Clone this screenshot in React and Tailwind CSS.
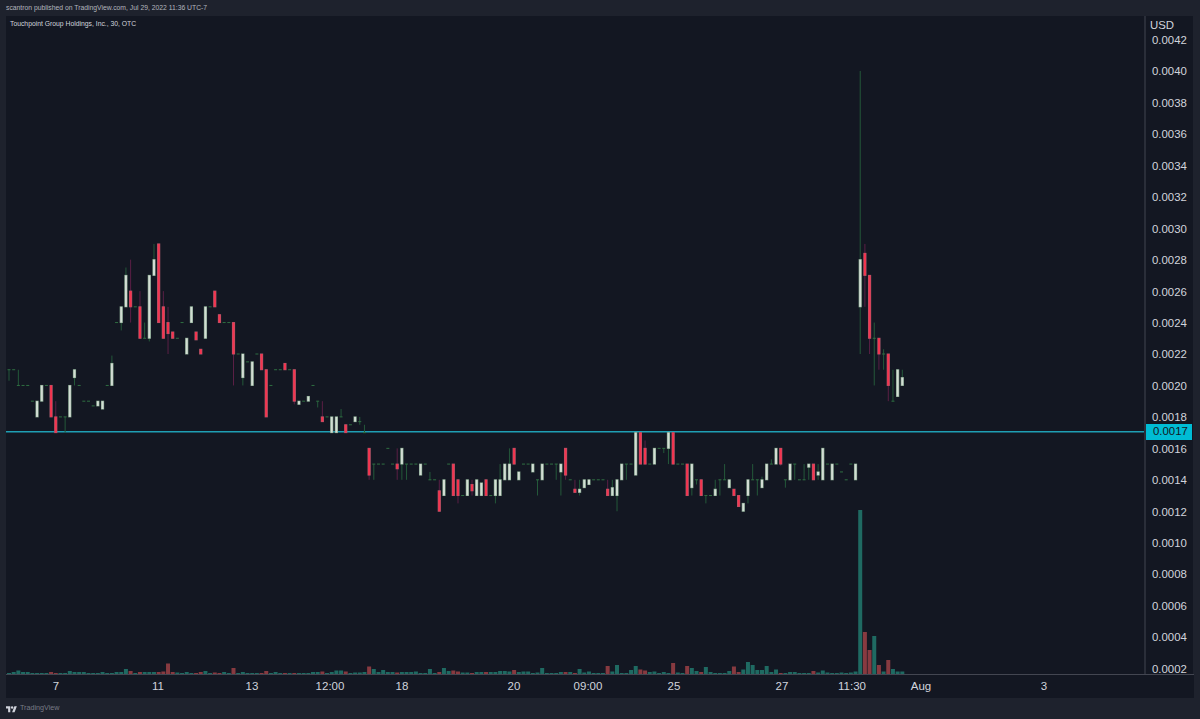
// Candles are [open, close, high?, low?] in units of 0.0001
const candles = [
  [21, 21, 21, 20.3], [21, 21], [20, 20, 21], [20, 20], [20, 20], [19, 19], [18, 19], [19, 20], [20, 20], [20, 18],
  [18, 17, 19], [18, 18], [18, 18, 18, 17], [18, 20], [20.5, 21, 21, 20], [20, 20], [19, 19], [19, 19], [18.7, 18.7], [18.7, 19],
  [18.5, 19], [20, 20], [20, 21.4, 21.9], [24, 24], [24, 25, 25, 23.5], [25, 27, 27.5], [26, 25, 28, 24], [25, 25], [25, 23, 26], [23, 23, 24],
  [23, 27, 27, 22.8], [27, 28, 29], [29, 24], [25, 23, 26], [24, 23.3, 25, 22], [23.4, 23], [23, 23], [24, 24], [22, 23], [24, 25],
  [23.4, 22.9], [22.3, 22], [23, 25], [25, 25], [26, 25], [24.5, 24], [24, 24], [24, 24], [24, 22, 24, 20], [22, 22],
  [20.5, 22, 22, 20], [21.5, 21.5], [20, 21.5], [22, 22], [22, 21], [21, 18], [20, 20], [21, 21], [21, 21], [21.4, 21],
  [21, 21], [21, 19, 21, 18.8], [18.8, 19], [19, 19], [19, 19.3], [20, 20], [19, 19, 19, 18.6], [18, 17.7, 19], [18, 18], [17, 18],
  [17, 18], [18, 18, 18.5], [17.5, 17], [17.5, 17.5], [17.7, 18], [17.7, 17.7, 18, 17.5], [17, 17, 17.5],
  [16, 14.3, 16, 14], [15, 15, 15, 14], [15, 15], [15, 15], [16, 16], [15, 15], [15, 14.7, 16, 14], [15, 16, 16, 14], [15, 15, 15, 14],
  [15, 15], [15, 15], [14.3, 15], [15, 15], [14, 14, 14.5], [14, 14], [13.3, 12, 14], [13, 14], [15, 15], [15, 13],
  [14, 13, 14, 12.5], [13, 13], [13, 14], [13.7, 13.3, 14, 13], [13, 14], [13, 13.8], [14, 13], [13, 13], [13, 14, 14, 12.5], [13, 14, 15],
  [14, 15], [14, 15, 16], [16, 15], [14, 14.5], [15, 15], [15, 15], [14.5, 15], [14, 14, 14, 13], [14, 15], [15, 15],
  [15, 15], [15, 15, 15, 14], [14.5, 15, 15, 13], [16, 14.3, 16, 14], [14, 14], [13.4, 13.2, 14], [13.2, 13.4, 14, 13], [13.5, 14], [13.7, 14], [14, 14],
  [14, 14], [14, 14], [13.4, 13, 14], [13, 13.5, 14], [13, 14, 14, 12], [14, 15], [15, 15, 15, 14], [15, 15], [14.3, 17], [17, 15],
  [16, 15, 16.5], [15, 15], [15, 16], [16, 16], [16, 16, 16, 15.7], [16, 17, 17, 15], [17, 15], [15, 15], [15, 15], [15, 13],
  [13.5, 15, 15, 13], [14, 14, 14, 13.7], [14, 13], [13, 13, 13, 12.5], [13, 13], [13, 13.4, 14], [14, 14, 14, 13], [14, 14, 15], [13.5, 14], [13.4, 13],
  [13, 12.3], [12, 12.5], [13, 14, 14, 12.5], [14, 14, 15], [14, 14, 14, 13], [13.5, 14, 14.2], [14, 15], [15, 15, 15.3], [15, 16], [16, 15, 16, 14.9],
  [14, 14, 14, 13.5], [14, 15], [15, 15, 15, 14], [14, 14], [14, 14, 15], [14.8, 15, 15, 14], [15, 14], [14.3, 14.5, 15, 14], [14, 16], [15, 15],
  [14, 15], [15, 15], [14.5, 14.5], [14, 14], [15, 15], [14, 15],
  [25, 28, 40, 22], [28.4, 27, 29, 25], [27, 23, 27, 22], [23, 23, 24, 20], [23, 22, 23, 21], [22, 22, 22.3, 21], [22, 20, 22, 19], [19, 19, 21], [19.3, 21], [20, 20.5, 21],
]

// Volume heights in px where they stand out, everything else is a thin base
const volumes = {
  1: 2, 2: 3.5, 3: 2, 4: 2, 9: 2, 13: 3, 14: 2, 15: 2, 16: 2, 20: 2, 23: 2, 24: 2, 25: 5, 26: 3, 28: 2, 29: 2, 30: 2, 31: 2, 32: 2, 33: 2.5, 34: 10.5, 35: 2,
  36: 1.5, 38: 2, 41: 2, 42: 3, 44: 1.5, 46: 2, 48: 6, 50: 2, 55: 3, 57: 2, 62: 1, 65: 2, 66: 2, 67: 2.5, 69: 2, 70: 3.5, 71: 3.5, 72: 2.5,
  74: 1.5, 75: 1.5, 76: 2, 77: 7.5, 78: 5, 79: 2, 80: 4, 81: 2, 82: 2, 83: 1.5, 84: 2, 85: 2, 86: 2, 87: 2.5, 90: 5, 92: 2, 93: 6, 94: 3,
  95: 3.5, 96: 2.5, 97: 1.5, 98: 1.5, 100: 2, 101: 2, 102: 2, 103: 2, 104: 2, 105: 3, 106: 3, 107: 2.5, 108: 4, 109: 2, 110: 2.5, 111: 2.5,
  113: 1.5, 114: 6, 118: 2, 119: 2, 120: 2, 122: 5, 123: 1.5, 124: 2.5, 128: 8, 129: 2.5, 130: 9, 133: 4, 134: 8, 135: 4.5, 136: 3.5, 137: 2,
  138: 2.5, 140: 2, 142: 11, 143: 1.5, 145: 8, 146: 6, 147: 3, 148: 2, 149: 7, 150: 2, 154: 3, 155: 7.5, 156: 2, 157: 4.5, 158: 12, 159: 9,
  160: 4, 161: 4, 162: 8, 163: 2, 164: 4.5, 167: 2, 168: 2, 172: 3, 173: 1.5, 174: 3.5, 175: 1.5, 178: 1.5, 180: 1.5, 181: 2.5,
  182: 164, 183: 42, 184: 24, 185: 38, 186: 9, 187: 2.5, 188: 14, 189: 5, 190: 2.5, 191: 2.5,
}

const prices = ['0.0042', '0.0040', '0.0038', '0.0036', '0.0034', '0.0032', '0.0030', '0.0028', '0.0026', '0.0024', '0.0022',
  '0.0020', '0.0018', '0.0016', '0.0014', '0.0012', '0.0010', '0.0008', '0.0006', '0.0004', '0.0002']

const yOf = (p) => 39.5 + (42 - p) * 15.725
const xOf = (i) => 9 + i * 4.677

function Candle({ i, data }) {
  const [o, c, high = Math.max(o, c), low = Math.min(o, c)] = data
  const x = xOf(i)
  const up = c >= o
  const wick = up ? '#24583a' : '#5a1f45'
  const wickEl = high > low && (
    <rect x={x - 0.5} y={yOf(high)} width="1" height={yOf(low) - yOf(high)} fill={wick} />
  )
  if (o === c) {
    return (
      <g>
        {wickEl}
        <rect x={x - 1.5} y={yOf(o) - 0.5} width="3" height="1" fill="#2f6f42" />
      </g>
    )
  }
  const top = yOf(Math.max(o, c)) - 0.5
  const h = Math.max(3, yOf(Math.min(o, c)) - top + 0.5)
  return (
    <g>
      {wickEl}
      <rect x={x - 1.6} y={top} width="3.2" height={h} fill={up ? '#7fa088' : '#a85a6c'} />
      <rect x={x - 1} y={top + 0.5} width="2" height={h - 1} fill={up ? '#d3ddd4' : '#f5344f'} />
    </g>
  )
}

function Chart() {
  return (
    <svg className="block h-full w-full" viewBox="6 16 1138 658">
      {candles.map((data, i) => {
        const up = data[1] >= data[0]
        const h = volumes[i] ?? 1
        return <rect key={i} x={xOf(i) - 2} y={674 - h} width="4" height={h} fill={up ? '#1f6a62' : '#873a40'} />
      })}
      <rect x="6" y="431" width="1138" height="1.5" fill="#1f9fb4" />
      {candles.map((data, i) => <Candle key={i} i={i} data={data} />)}
    </svg>
  )
}

const timeLabels = [
  ['7', 'ml-[30px]'], ['11', 'ml-[62px]'], ['13', 'ml-[54px]'], ['12:00', 'ml-[38px]'], ['18', 'ml-[32px]'], ['20', 'ml-[72px]'],
  ['09:00', 'ml-[34px]'], ['25', 'ml-[46px]'], ['27', 'ml-[68px]'], ['11:30', 'ml-[30px]'], ['Aug', 'ml-[29px]'], ['3', 'ml-[83px]'],
]

export default function App() {
  return (
    <div className="flex h-[719px] w-[1200px] flex-col overflow-hidden bg-[#1e222d] font-['Liberation_Sans',sans-serif] text-[#d1d4dc]">
      <div className="flex h-[16px] shrink-0 items-center pl-[6px] text-[6.8px] text-[#b2b5be]">
        scantron published on TradingView.com, Jul 29, 2022 11:36 UTC-7
      </div>

      <div className="mx-[6px] flex min-h-0 flex-1 flex-col bg-[#131722]">
        <div className="flex h-[658px] shrink-0">
          <div className="relative min-w-0 flex-1">
            <Chart />
            <div className="absolute left-[4px] top-[3px] text-[6.8px] leading-[9px] text-[#d1d4dc]">
              Touchpoint Group Holdings, Inc., 30, OTC
            </div>
          </div>
          <div className="relative w-[49px] shrink-0 border-l-2 border-[#2a2e39] pl-[6px] pt-[9px] text-[11.4px] leading-none">
            <div className="absolute left-[4px] top-[4px]">USD</div>
            {prices.map((p) => (
              <div key={p} className="flex h-[31.45px] items-center">{p}</div>
            ))}
            <div className="absolute left-0 top-[408px] flex h-[16px] w-[46px] items-center bg-[#00bcd4] pl-[7px] text-[#131722]">0.0017</div>
          </div>
          <div className="w-px shrink-0 bg-[#1e222d]" />
        </div>
        <div className="flex h-[24px] shrink-0 items-center border-t border-[#434651] text-[11.5px]">
          {timeLabels.map(([label, ml]) => (
            <div key={label} className={`${ml} w-[40px] shrink-0 text-center font-medium`}>{label}</div>
          ))}
        </div>
      </div>

      <div className="flex h-[21px] shrink-0 items-center gap-[3px] pl-[6px] text-[7.2px] text-[#787b86]">
        <svg width="11" height="8" viewBox="0 2 36 22" fill="#d1d4dc">
          <path d="M14 24H7V11H0V4h14v20zM28 24h-8l7.5-20h8L28 24z" />
          <circle cx="20" cy="8" r="4" />
        </svg>
        <span>TradingView</span>
      </div>
    </div>
  )
}
